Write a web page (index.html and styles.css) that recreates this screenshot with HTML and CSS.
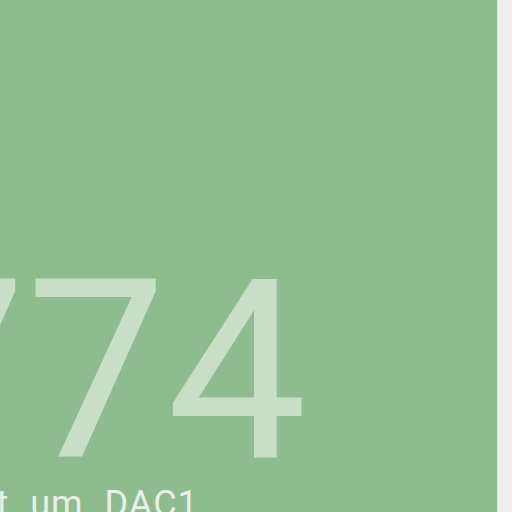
FILE: index.html
```html
<!DOCTYPE html>
<html>
<head>
<meta charset="utf-8">
<link rel="stylesheet" href="styles.css">
</head>
<body>
<div class="page">
  <div class="card">
    <div class="value">1774</div>
    <div class="label">Zuletzt um DAC1</div>
  </div>
  <div class="side"></div>
</div>
</body>
</html>
```
FILE: styles.css
```css
html, body {
  margin: 0;
  padding: 0;
  background: #eeeeee;
}
.page {
  display: flex;
  width: 512px;
  height: 512px;
  overflow: hidden;
}
.card {
  width: 498px;
  flex: 0 0 498px;
  height: 512px;
  background: #8fbc8f;
  border-right: 1px solid #dfe6df;
  box-sizing: border-box;
  overflow: hidden;
  display: flex;
  flex-direction: column;
  font-family: Roboto, "Liberation Sans", sans-serif;
}
.value {
  margin-top: 247px;
  margin-left: -255px;
  font-size: 250px;
  line-height: 250px;
  height: 250px;
  color: rgba(255, 255, 255, 0.5);
  white-space: nowrap;
}
.label {
  margin-top: -11px;
  margin-left: -108px;
  font-size: 36px;
  line-height: 36px;
  letter-spacing: 1px;
  word-spacing: 11px;
  color: rgba(255, 255, 255, 0.8);
  white-space: nowrap;
}
.side {
  flex: 1;
  background: #eeeeee;
}
```
